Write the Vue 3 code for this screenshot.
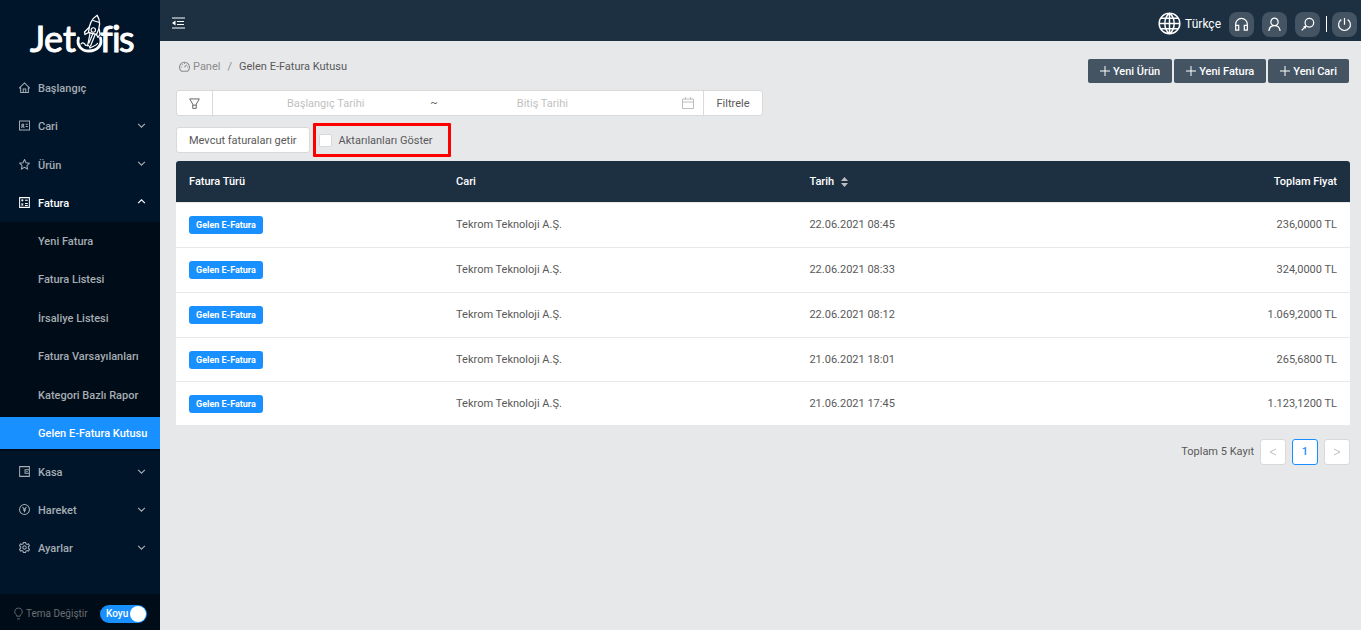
<script setup>
import { ref } from 'vue'

const topMenu = [
  { label: 'Başlangıç', icon: 'home', arrow: false },
  { label: 'Cari', icon: 'card', arrow: true },
  { label: 'Ürün', icon: 'star', arrow: true },
  { label: 'Fatura', icon: 'invoice', arrow: true, open: true },
]
const subMenu = [
  'Yeni Fatura',
  'Fatura Listesi',
  'İrsaliye Listesi',
  'Fatura Varsayılanları',
  'Kategori Bazlı Rapor',
  'Gelen E-Fatura Kutusu',
]
const bottomMenu = [
  { label: 'Kasa', icon: 'wallet', arrow: true },
  { label: 'Hareket', icon: 'coin', arrow: true },
  { label: 'Ayarlar', icon: 'gear', arrow: true },
]
const selected = ref('Gelen E-Fatura Kutusu')
const dark = ref(true)
const showTransferred = ref(false)
const actions = ['Yeni Ürün', 'Yeni Fatura', 'Yeni Cari']
const rows = [
  { type: 'Gelen E-Fatura', cari: 'Tekrom Teknoloji A.Ş.', date: '22.06.2021 08:45', total: '236,0000 TL' },
  { type: 'Gelen E-Fatura', cari: 'Tekrom Teknoloji A.Ş.', date: '22.06.2021 08:33', total: '324,0000 TL' },
  { type: 'Gelen E-Fatura', cari: 'Tekrom Teknoloji A.Ş.', date: '22.06.2021 08:12', total: '1.069,2000 TL' },
  { type: 'Gelen E-Fatura', cari: 'Tekrom Teknoloji A.Ş.', date: '21.06.2021 18:01', total: '265,6800 TL' },
  { type: 'Gelen E-Fatura', cari: 'Tekrom Teknoloji A.Ş.', date: '21.06.2021 17:45', total: '1.123,1200 TL' },
]
const icons = {
  home: 'M1.6 8.6 8 2.2l6.4 6.4H12.9V14.300H3.1V8.600Z M6.400 14V9.800H9.600V14',
  card: 'M1.600 2.200H14.400V13.800H1.600Z M4 11C4 8.900 7.600 8.900 7.600 11 M5.800 8.600A1.300 1.300 0 1 0 5.800 6A1.300 1.300 0 1 0 5.800 8.600 M9.500 6.500H12.200 M9.500 9.200H12.200',
  star: 'M8 1.700 9.900 5.700 14.300 6.300 11.100 9.400 11.900 13.800 8 11.700 4.100 13.800 4.900 9.400 1.700 6.300 6.100 5.700Z',
  invoice: 'M1.800 1.800H14.200V14.200H1.800Z M3.800 5.200H6.600 M5.200 3.800V6.600 M8.600 5.200H12.200 M4 9.400 6.400 11.800 M6.400 9.400 4 11.800 M8.600 9.400H12.200 M8.600 11.800H12.200',
  wallet: 'M1.800 1.800H14.200V14.200H1.800Z M14.200 5.800H8.700V10.200H14.200 M10.400 8H12',
  coin: 'M8 1.700A6.300 6.300 0 1 0 8 14.300A6.300 6.300 0 1 0 8 1.700 M5.600 4.800 8 8.200 10.400 4.800 M8 8.200V11.600 M6.200 8.800H9.800',
  gear: 'M6.700 1.500H9.300L9.700 3.200 11.200 4.100 13.100 3.500 14.400 5.700 12.900 7.100V8.900L14.400 10.300 13.100 12.500 11.200 11.900 9.700 12.800 9.300 14.500H6.700L6.300 12.800 4.800 11.900 2.900 12.500 1.600 10.300 3.100 8.900V7.100L1.600 5.700 2.900 3.500 4.800 4.100 6.300 3.200Z M8 5.800A2.200 2.200 0 1 0 8 10.200A2.200 2.200 0 1 0 8 5.800',
}
</script>

<template>
  <div class="shell">
    <aside class="sidebar">
      <a class="logo" href="#" aria-label="Jetofis">
        <svg viewBox="0 0 104 44" aria-hidden="true">
          <text x="2" y="38">J</text>
          <text x="16" y="38">e</text>
          <text x="35" y="38">t</text>
          <text x="72" y="38">f</text>
          <text x="84" y="38">i</text>
          <text x="91" y="38">s</text>
          <g fill="none" stroke="#fff" stroke-linecap="round" stroke-linejoin="round">
            <path d="M50.500 24C48.500 31.500 53.500 37 61 37C69 37 74.500 31.500 72.500 24" stroke-width="2.800" />
            <path d="M53 30C54.500 28 57 29 57.500 31.500C60 30.500 61.500 32 62 34C64.500 32 68 32 69.500 29.500" stroke-width="1.200" />
            <path d="M60.500 18.500C61 11 64 4.500 69.200 1.300C72.500 6.500 72 14 68.500 20.500Z" fill="#001529" stroke-width="1.300" />
            <path d="M61 13.500 56.500 18 57 20.500 60.500 18.500 M71.300 15.500 72 20.500 70 23.500 68.500 20.500 M65 6.500 71.500 8.500" stroke-width="1.300" />
            <path d="M62 19.500 59.500 32 M67 21 62.500 32 M64.500 20.500 61 29" stroke-width="1.200" />
            <circle cx="65.300" cy="16" r="2.200" stroke-width="1.100" />
          </g>
        </svg>
      </a>
      <nav class="menu">
        <a v-for="m in topMenu" :key="m.label" href="#" class="item" :class="{ open: m.open }">
          <svg class="mi" viewBox="1 1 14 14"><path :d="icons[m.icon]" /></svg>
          <span>{{ m.label }}</span>
          <svg v-if="m.arrow" class="arrow" viewBox="0 0 8 8"><path :d="m.open ? 'M1 5.500 4 2.500 7 5.500' : 'M1 2.500 4 5.500 7 2.500'" /></svg>
        </a>
      </nav>
      <nav class="submenu">
        <a v-for="s in subMenu" :key="s" href="#" class="item" :class="{ selected: selected === s }" @click.prevent="selected = s"><span>{{ s }}</span></a>
      </nav>
      <nav class="menu lower">
        <a v-for="m in bottomMenu" :key="m.label" href="#" class="item">
          <svg class="mi" viewBox="1 1 14 14"><path :d="icons[m.icon]" /></svg>
          <span>{{ m.label }}</span>
          <svg class="arrow" viewBox="0 0 8 8"><path d="M1 2.500 4 5.500 7 2.500" /></svg>
        </a>
      </nav>
      <div class="theme">
        <svg viewBox="1 0 10 14"><path d="M4 10V8.800C.6 6.800 1.200 1 6 1S11.400 6.800 8 8.800V10Z M4.300 13H7.700" /></svg>
        <label for="theme">Tema Değiştir</label>
        <button id="theme" class="switch" type="button" role="switch" :aria-checked="dark" @click="dark = !dark">Koyu<i /></button>
      </div>
    </aside>

    <div class="body">
      <header class="topbar">
        <button class="fold" type="button" aria-label="Menü">
          <svg viewBox="0 0 13 12"><path d="M0 1H13 M5 4.500H12 M5 7.500H12 M0 11H13" /><path class="solid" d="M0 6 3.500 3.500V8.500Z" /></svg>
        </button>
        <div class="tools">
          <button class="lang" type="button">
            <svg viewBox="0 0 24 24"><path d="M12 1.200A10.800 10.800 0 1 0 12 22.800A10.800 10.800 0 1 0 12 1.200Z M12 1.200C5.500 6.500 5.500 17.500 12 22.800C18.500 17.500 18.500 6.500 12 1.200Z M12 1.200V22.800 M1.200 12H22.800 M3 6.500H21 M3 17.500H21" /></svg>
            Türkçe
          </button>
          <button class="tool" type="button" aria-label="Destek"><svg viewBox="0 0 16 16"><path d="M1.800 9V7.700A6.200 6.200 0 0 1 14.200 7.700V9 M1.800 9H5V14H1.800Z M11 9H14.200V14H11Z" /></svg></button>
          <button class="tool" type="button" aria-label="Hesap"><svg viewBox="0 0 16 16"><path d="M8 1.300A3.900 3.900 0 1 0 8 9.100A3.900 3.900 0 1 0 8 1.300 M2 15C2.300 11.500 4.500 9.100 8 9.100S13.700 11.500 14 15" /></svg></button>
          <button class="tool" type="button" aria-label="Ara"><svg viewBox="0 0 16 16"><path d="M10 1.500A4.600 4.600 0 1 0 10 10.700A4.600 4.600 0 1 0 10 1.500 M6.700 9.300 1.800 14.200 M4 9.800 6.200 12" /></svg></button>
          <span class="sep" />
          <button class="tool" type="button" aria-label="Çıkış"><svg viewBox="0 0 16 16"><path d="M8 1V8.300 M4.600 2.800A6.300 6.300 0 1 0 11.400 2.800" /></svg></button>
        </div>
      </header>

      <main class="content">
        <div class="headline">
          <nav class="crumbs">
            <a href="#"><svg viewBox="1 1 14 14"><path d="M4 14A6.400 6.400 0 1 1 12 14Z M8 8.800 10.600 6 M8 3.400V4.700 M3.400 8.500H4.700 M11.300 8.500H12.600 M4.700 5.200 5.600 6.100" /></svg>Panel</a>
            <span class="slash">/</span>
            <span>Gelen E-Fatura Kutusu</span>
          </nav>
          <div class="actions">
            <button v-for="a in actions" :key="a" type="button">
              <svg viewBox="0 0 10 10"><path d="M5 0V10 M0 5H10" /></svg><span>{{ a }}</span>
            </button>
          </div>
        </div>

        <div class="filter">
          <button class="funnel" type="button" aria-label="Filtre"><svg viewBox="0 0 12 12"><path d="M.8 1H11.200L7.900 6.800V11.300H4.100V6.800Z M4.100 7.800H7.900" /></svg></button>
          <div class="range">
            <input type="text" placeholder="Başlangıç Tarihi" aria-label="Başlangıç Tarihi" />
            <span>~</span>
            <input type="text" placeholder="Bitiş Tarihi" aria-label="Bitiş Tarihi" />
            <svg viewBox="0 0 12 12"><path d="M.5 2H11.500V11.500H.5Z M.5 5H11.500 M3.500 0V3 M8.500 0V3" /></svg>
          </div>
          <button class="apply" type="button">Filtrele</button>
        </div>

        <div class="options">
          <button class="plain" type="button">Mevcut faturaları getir</button>
          <label class="marked"><input v-model="showTransferred" type="checkbox" /><span>Aktarılanları Göster</span></label>
        </div>

        <table>
          <colgroup><col class="c1" /><col class="c2" /><col class="c3" /><col /></colgroup>
          <thead>
            <tr>
              <th>Fatura Türü</th>
              <th>Cari</th>
              <th>Tarih<svg viewBox="0 0 7 10"><path d="M0 4 3.500 0 7 4Z M0 6H7L3.500 10Z" /></svg></th>
              <th class="num">Toplam Fiyat</th>
            </tr>
          </thead>
          <tbody>
            <tr v-for="r in rows" :key="r.date">
              <td><span class="tag">{{ r.type }}</span></td>
              <td>{{ r.cari }}</td>
              <td>{{ r.date }}</td>
              <td class="num">{{ r.total }}</td>
            </tr>
          </tbody>
        </table>

        <nav class="pager">
          <span>Toplam 5 Kayıt</span>
          <button type="button" disabled aria-label="Önceki"><svg viewBox="0 0 8 8"><path d="M7 1 1 4 7 7" /></svg></button>
          <button type="button" class="current">1</button>
          <button type="button" disabled aria-label="Sonraki"><svg viewBox="0 0 8 8"><path d="M1 1 7 4 1 7" /></svg></button>
        </nav>
      </main>
    </div>
  </div>
</template>

<style>
body {
  margin: 0;
  background: #e7e8ea;
}
</style>

<style scoped>
* {
  box-sizing: border-box;
}
.shell {
  display: flex;
  min-height: 100vh;
  font-family: Roboto, "Liberation Sans", sans-serif;
  font-size: 11px;
  line-height: 16px;
  color: #595959;
}
button,
input {
  margin: 0;
  font: inherit;
  color: inherit;
}
button {
  display: inline-flex;
  align-items: center;
  justify-content: center;
  padding: 0;
  border: 0;
  background: none;
  cursor: pointer;
}
a {
  color: inherit;
  text-decoration: none;
}
svg {
  display: block;
  flex: none;
  fill: none;
  stroke: currentColor;
}
.sidebar {
  display: flex;
  flex-direction: column;
  flex: none;
  width: 160px;
  background: #001529;
  color: #a6adb4;
  font-weight: 500;
}
.logo {
  padding: 14px 28px;
}
.logo svg {
  width: 104px;
  height: 44px;
  overflow: visible;
}
.logo text {
  fill: #fff;
  stroke: #fff;
  stroke-width: 1px;
  font-family: Lato, sans-serif;
  font-size: 36px;
  font-weight: 400;
}
.menu {
  display: flex;
  flex-direction: column;
  justify-content: space-between;
  min-height: 150px;
  padding-bottom: 3px;
}
.lower {
  min-height: 0;
  gap: 6px;
  padding-top: 5px;
}
.item {
  display: flex;
  align-items: center;
  height: 32px;
  padding: 0 14px 0 19px;
}
.item span {
  flex: 1;
  margin-left: 8px;
  padding-top: 2px;
}
.mi {
  width: 11px;
  height: 11px;
  margin-bottom: 1px;
  stroke-width: 1.3;
}
.arrow {
  width: 9px;
  height: 9px;
  margin-bottom: 2px;
  stroke-width: 1;
}
.open {
  color: #fff;
}
.submenu {
  display: flex;
  flex-direction: column;
  justify-content: space-between;
  min-height: 229px;
  padding: 3px 0 2px;
  background: #000c17;
}
.submenu .item {
  padding: 0 0 0 30px;
  white-space: nowrap;
}
.submenu .selected {
  background: #1890ff;
  color: #fff;
}
.theme {
  display: flex;
  align-items: center;
  height: 36px;
  margin-top: auto;
  padding: 3px 13px 0 14px;
  background: #000c17;
  color: #6b6f74;
  font-size: 10px;
  font-weight: 400;
}
.theme svg {
  width: 9px;
  height: 13px;
  margin-right: 3px;
}
.switch {
  justify-content: space-between;
  width: 47px;
  height: 18px;
  margin-left: auto;
  padding: 0 1px 0 6px;
  border-radius: 9px;
  background: #1890ff;
  color: #fff;
  font-size: 10px;
  font-weight: 500;
}
.switch i {
  width: 16px;
  height: 16px;
  border-radius: 50%;
  background: #fff;
}
.body {
  flex: 1;
  min-width: 0;
}
.topbar {
  display: flex;
  justify-content: space-between;
  height: 41px;
  padding: 12px 4px 0 12px;
  background: #1d3041;
  color: #fff;
}
.fold {
  width: 13px;
  height: 22px;
}
.fold svg {
  width: 13px;
  height: 12px;
}
.solid {
  fill: currentColor;
  stroke: none;
}
.tools {
  display: flex;
  align-items: flex-start;
  gap: 8px;
}
.lang {
  gap: 4px;
  height: 23px;
  font-size: 12px;
}
.lang svg {
  width: 23px;
  height: 23px;
  stroke-width: 1.5;
}
.tool {
  width: 25px;
  height: 25px;
  border-radius: 8px;
  background: #445463;
}
.tool svg {
  width: 15px;
  height: 15px;
  stroke-width: 1.3;
}
.sep {
  width: 1px;
  height: 16px;
  margin: 4px -3px 0 -2px;
  background: #fff;
}
.content {
  padding: 17px 11px 0 16px;
}
.headline {
  display: flex;
  align-items: flex-start;
  justify-content: space-between;
}
.crumbs {
  display: flex;
  padding: 0 0 0 3px;
  line-height: 18px;
}
.crumbs a {
  display: flex;
  align-items: center;
  gap: 3px;
  color: #8c8c8c;
}
.crumbs svg {
  width: 11px;
  height: 11px;
  margin-bottom: 2px;
  stroke-width: 1.3;
}
.slash {
  margin: 0 7px;
  color: #8c8c8c;
}
.actions {
  display: flex;
  gap: 2px;
  padding: 1px 1px 0 0;
}
.actions button {
  gap: 3px;
  height: 24px;
  padding: 0 12px;
  border-radius: 2px;
  background: #445463;
  color: #fff;
  font-weight: 500;
}
.actions span {
  padding-top: 1px;
}
.actions svg {
  width: 10px;
  height: 10px;
}
.filter {
  display: flex;
  width: 587px;
  max-width: 100%;
  height: 26px;
  margin-top: 7px;
  border: 1px solid #d9d9d9;
  border-radius: 3px;
  background: #fff;
}
.funnel {
  width: 36px;
  border-right: 1px solid #d9d9d9;
}
.funnel svg {
  width: 11px;
  height: 11px;
}
.range {
  display: flex;
  flex: 1;
  align-items: center;
  padding: 0 9px 0 8px;
}
.range input {
  flex: 1;
  width: 0;
  padding: 1px 0 0;
  border: 0;
  outline: 0;
  background: none;
  text-align: center;
}
.range input::placeholder {
  color: #bfbfbf;
}
.range svg {
  width: 12px;
  height: 12px;
  margin-left: 35px;
  color: #bfbfbf;
}
.apply {
  width: 59px;
  padding-top: 1px;
  border-left: 1px solid #d9d9d9;
}
.options {
  display: flex;
  align-items: center;
  gap: 3px;
  margin-top: 7px;
}
.plain {
  height: 26px;
  padding: 1px 12px 0;
  border: 1px solid #d9d9d9;
  border-radius: 3px;
  background: #fff;
}
.marked {
  display: flex;
  align-items: center;
  gap: 7px;
  height: 34px;
  padding: 0 15px 0 3px;
  border: 3px solid #f00;
  border-radius: 1px;
}
.marked span {
  padding-top: 1px;
}
.marked input {
  width: 13px;
  height: 13px;
  border: 1px solid #d9d9d9;
  border-radius: 2px;
  background: #fff;
  appearance: none;
}
.marked input:checked {
  background: #1890ff;
}
table {
  width: 100%;
  height: 264px;
  margin-top: 4px;
  border-spacing: 0;
  table-layout: fixed;
  background: #fff;
  border-radius: 3px 3px 0 0;
}
.c1 {
  width: 22.75%;
}
.c2 {
  width: 30.1%;
}
.c3 {
  width: 24%;
}
th,
td {
  padding: 0 13px;
  text-align: left;
}
th {
  height: 42px;
  border-bottom: 1px solid #e8e8e8;
  background: #1d3041;
  color: #fff;
  font-weight: 500;
}
th:first-child {
  border-top-left-radius: 3px;
}
th:last-child {
  border-top-right-radius: 3px;
}
th svg {
  display: inline-block;
  width: 7px;
  height: 10px;
  margin-left: 7px;
  fill: #bfbfbf;
  stroke: none;
  vertical-align: middle;
}
td {
  border-bottom: 1px solid #e8e8e8;
}
tr:last-child td {
  border-bottom: 0;
}
.num {
  text-align: right;
}
.tag {
  display: inline-block;
  padding: 0 7px;
  border-radius: 3px;
  background: #1890ff;
  color: #fff;
  font-size: 9px;
  font-weight: 700;
  line-height: 18px;
}
.pager {
  display: flex;
  align-items: center;
  justify-content: flex-end;
  gap: 6px;
  margin-top: 14px;
}
.pager button {
  width: 26px;
  height: 26px;
  border: 1px solid #d9d9d9;
  border-radius: 3px;
  background: #fff;
  color: #bfbfbf;
}
.pager svg {
  width: 8px;
  height: 8px;
}
.pager .current {
  border-color: #1890ff;
  color: #1890ff;
  font-weight: 500;
}
</style>
